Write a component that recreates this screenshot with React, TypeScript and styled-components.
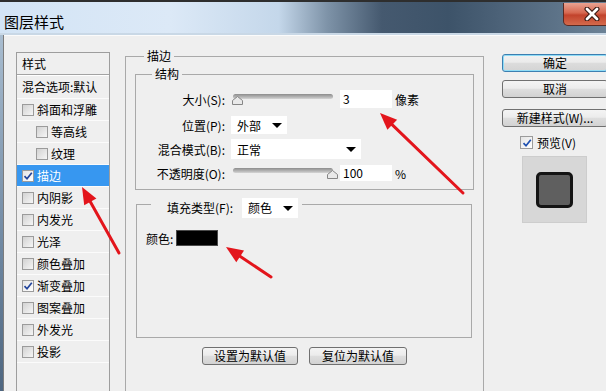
import React from 'react'
import styled, {createGlobalStyle, css} from 'styled-components'

//** data
interface LayerItem {
  name: string
  checked?: boolean
  indent?: boolean
  active?: boolean
}

const layers: LayerItem[] = [
  {name: '斜面和浮雕'},
  {name: '等高线', indent: true},
  {name: '纹理', indent: true},
  {name: '描边', checked: true, active: true},
  {name: '内阴影'},
  {name: '内发光'},
  {name: '光泽'},
  {name: '颜色叠加'},
  {name: '渐变叠加', checked: true},
  {name: '图案叠加'},
  {name: '外发光'},
  {name: '投影'},
]

type Pt = [number, number]

const arrows: {tail: Pt, tip: Pt}[] = [
  {tail: [119, 253], tip: [82, 187]},
  {tail: [463, 193], tip: [380, 113]},
  {tail: [271, 277], tip: [226, 247]},
]

const arrowParts = (tail: Pt, tip: Pt, len = 17, half = 7) => {
  const dx = tip[0] - tail[0]
  const dy = tip[1] - tail[1]
  const d = Math.hypot(dx, dy)
  const ux = dx / d
  const uy = dy / d
  const bx = tip[0] - ux * len
  const by = tip[1] - uy * len
  const head = `${tip[0]},${tip[1]} ${bx - uy * half},${by + ux * half} ${bx + uy * half},${by - ux * half}`
  return {bx: bx + ux * 2, by: by + uy * 2, head}
}

//** small parts
const Check = ({color = '#22449c'}: {color?: string}) => (
  <svg width="10" height="10" viewBox="0 0 10 10">
    <path d="M1.5 5.2 L4 7.8 L8.8 1.8" fill="none" stroke={color} strokeWidth="1.7" />
  </svg>
)

const CheckBox = ({checked, size = 12}: {checked?: boolean, size?: number}) => (
  <Box $size={size} $checked={checked}>
    {checked && <Check />}
  </Box>
)

const Slider = ({value}: {value: number}) => (
  <SliderWrap>
    <Track />
    <Thumb style={{left: -1 + value * 95}} width="11" height="9" viewBox="0 0 11 9">
      <path d="M5.5 0.5 L10.5 4.5 L10.5 8.5 L0.5 8.5 L0.5 4.5 Z" fill="#e9e9e9" stroke="#868686" />
    </Thumb>
  </SliderWrap>
)

const Select = ({text, width, height}: {text: string, width: number, height: number}) => (
  <SelectBox $w={width} $h={height}>
    <span>{text}</span>
    <Caret />
  </SelectBox>
)

export default function App() {
  return (
    <Window>
      <GlobalStyle />
      <TitleBar>
        <Title>图层样式</Title>
        <CloseButton>
          <svg width="16" height="14" viewBox="0 0 16 14">
            <path d="M3 2 L13 12 M13 2 L3 12" stroke="#3a1a14" strokeWidth="5" strokeLinecap="round" />
            <path d="M3 2 L13 12 M13 2 L3 12" stroke="#ffffff" strokeWidth="2.8" strokeLinecap="round" />
          </svg>
        </CloseButton>
      </TitleBar>

      <Frame>
        <FrameEdge />
        <Body>

          {/** style list **/}
          <StyleList>
            <ListHeader>样式</ListHeader>
            <BlendRow>混合选项:默认</BlendRow>
            {layers.map(item => (
              <LayerRow key={item.name} $indent={item.indent} $active={item.active}>
                <CheckBox checked={item.checked} />
                <span>{item.name}</span>
              </LayerRow>
            ))}
          </StyleList>

          {/** stroke settings **/}
          <MainPanel>
            <PanelLegend>描边</PanelLegend>
            <StructureSet>
              <GroupLegend>结构</GroupLegend>
              <FormRow $h={26}>
                <FieldLabel>大小(S):</FieldLabel>
                <Slider value={0} />
                <NumberBox $h={18}>3</NumberBox>
                <Unit>像素</Unit>
              </FormRow>
              <FormRow $h={26}>
                <FieldLabel>位置(P):</FieldLabel>
                <Select text="外部" width={56} height={18} />
              </FormRow>
              <FormRow $h={22}>
                <FieldLabel>混合模式(B):</FieldLabel>
                <Select text="正常" width={130} height={20} />
              </FormRow>
              <FormRow $h={26}>
                <FieldLabel>不透明度(O):</FieldLabel>
                <Slider value={1} />
                <NumberBox $h={16}>100</NumberBox>
                <Unit>%</Unit>
              </FormRow>
            </StructureSet>

            <FillSet>
              <FillLegend>
                <span>填充类型(F):</span>
                <Select text="颜色" width={56} height={20} />
              </FillLegend>
              <FillBody>
                <ColorRow>
                  <span>颜色:</span>
                  <Swatch />
                </ColorRow>
              </FillBody>
            </FillSet>

            <ButtonRow>
              <Button $w={96}>设置为默认值</Button>
              <Button $w={98}>复位为默认值</Button>
            </ButtonRow>
          </MainPanel>

          {/** actions **/}
          <SideColumn>
            <Button $w={106} $primary>确定</Button>
            <Button $w={106} $gap={8}>取消</Button>
            <Button $w={106} $gap={11}>新建样式(W)...</Button>
            <PreviewToggle>
              <Box $size={13} $checked>
                <Check color="#1d4fb0" />
              </Box>
              <span>预览(V)</span>
            </PreviewToggle>
            <PreviewBox>
              <PreviewSwatch />
            </PreviewBox>
          </SideColumn>
        </Body>
      </Frame>

      <Overlay width="606" height="391">
        {arrows.map((a, i) => {
          const p = arrowParts(a.tail, a.tip)
          return (
            <g key={i}>
              <line x1={a.tail[0]} y1={a.tail[1]} x2={p.bx} y2={p.by} stroke="#e3151c" strokeWidth="3" strokeLinecap="round" />
              <polygon points={p.head} fill="#e3151c" />
            </g>
          )
        })}
      </Overlay>
    </Window>
  )
}

const GlobalStyle = createGlobalStyle`
  html, body {
    margin: 0;
    padding: 0;
    background: #efefef;
  }
  body {
    font-family: "Noto Sans CJK SC", "Liberation Sans", sans-serif;
    font-size: 12px;
    color: #000;
  }
`
const Window = styled.div`
  position: relative;
  width: 606px;
  height: 391px;
  overflow: hidden;
  background: #efefef;
`
const TitleBar = styled.div`
  display: flex;
  justify-content: space-between;
  align-items: flex-start;
  height: 35px;
  box-sizing: border-box;
  border-top: 2px solid #2e2e2e;
  background: linear-gradient(90deg, #d3e4f5 0%, #dce9f7 28%, #c4d7ea 46%, #7e93a8 54%, #45596f 63%, #3d5369 74%, #52687e 86%, #6c8296 100%);
  box-shadow: inset 0 -2px 0 #c9d8e6;
`
const Title = styled.div`
  margin-top: 10px;
  padding-left: 4px;
  font-size: 15px;
  line-height: 20px;
  color: #000;
`
const CloseButton = styled.div`
  display: flex;
  align-items: center;
  justify-content: center;
  width: 58px;
  height: 23px;
  margin-top: 1px;
  margin-right: -15px;
  box-sizing: border-box;
  border: 1px solid #5a2a22;
  border-top: none;
  border-radius: 0 0 5px 5px;
  background: linear-gradient(#e9a392 0%, #d6674f 45%, #c2432c 55%, #d46a4c 100%);
`
const Frame = styled.div`
  display: flex;
  height: 356px;
`
const FrameEdge = styled.div`
  width: 3px;
  flex-shrink: 0;
  background: linear-gradient(#a9bdd0, #6f88a2 60%, #4e6680);
  border-right: 1px solid #7c7c7c;
`
const Body = styled.div`
  display: flex;
  flex: 1;
  align-items: flex-start;
  padding: 12px 0 0 12px;
  background: #efefef;
  border-top: 1px solid #fbfbfb;
  overflow: hidden;
`
const StyleList = styled.div`
  flex-shrink: 0;
  width: 94px;
  height: 360px;
  margin-top: 4px;
  box-sizing: border-box;
  border: 1px solid #9d9d9d;
  border-bottom: none;
  line-height: 16px;
`
const ListHeader = styled.div`
  height: 21px;
  padding-left: 5px;
  line-height: 21px;
  border-bottom: 1px solid #a3a3a3;
  box-shadow: 0 1px 0 #fff;
`
const BlendRow = styled.div`
  height: 23px;
  padding-left: 5px;
  line-height: 22px;
  border-bottom: 1px solid #fbfbfb;
  box-sizing: border-box;
  margin-top: 1px;
  white-space: nowrap;
`
const LayerRow = styled.div<{$indent?: boolean, $active?: boolean}>`
  display: flex;
  align-items: center;
  gap: 3px;
  height: 22px;
  box-sizing: border-box;
  padding-left: ${p => p.$indent ? 19 : 5}px;
  border-bottom: 1px solid #fbfbfb;
  background: ${p => p.$active ? '#3797f0' : 'transparent'};
  color: ${p => p.$active ? '#fff' : '#000'};
`
const Box = styled.span<{$size: number, $checked?: boolean}>`
  display: inline-flex;
  align-items: center;
  justify-content: center;
  flex-shrink: 0;
  width: ${p => p.$size}px;
  height: ${p => p.$size}px;
  box-sizing: border-box;
  border: 1px solid #9b9b9b;
  background: ${p => p.$checked ? 'linear-gradient(135deg, #e4e4e4, #ffffff)' : 'linear-gradient(135deg, #d2d2d2, #f6f6f6)'};
`
const MainPanel = styled.fieldset`
  flex-shrink: 0;
  width: 359px;
  height: 360px;
  margin: 0 0 0 15px;
  padding: 0 9px;
  box-sizing: border-box;
  min-width: 0;
  border: 1px solid #a9a9a9;
`
const PanelLegend = styled.legend`
  margin-left: 9px;
  padding: 0 3px;
  line-height: 16px;
`
const StructureSet = styled.fieldset`
  margin: 2px 0 0;
  padding: 4px 0 3px;
  min-width: 0;
  border: 1px solid #a9a9a9;
`
const GroupLegend = styled.legend`
  margin-left: 16px;
  padding: 0 3px;
  line-height: 16px;
`
const FormRow = styled.div<{$h: number}>`
  display: flex;
  align-items: center;
  height: ${p => p.$h}px;
`
const FieldLabel = styled.span`
  flex-shrink: 0;
  width: 89px;
  margin-right: 6px;
  text-align: right;
  white-space: nowrap;
`
const SliderWrap = styled.div`
  position: relative;
  width: 100px;
  height: 12px;
  margin-left: 2px;
`
const Track = styled.div`
  margin-top: 1px;
  height: 5px;
  border-radius: 3px;
  background: linear-gradient(#8c8c8c, #bdbdbd 70%, #d6d6d6);
`
const Thumb = styled.svg`
  position: absolute;
  top: 3px;
`
const NumberBox = styled.div<{$h: number}>`
  width: 52px;
  height: ${p => p.$h}px;
  margin-left: 7px;
  padding-left: 3px;
  box-sizing: border-box;
  background: #fff;
  line-height: ${p => p.$h}px;
`
const Unit = styled.span`
  margin-left: 3px;
`
const SelectBox = styled.div<{$w: number, $h: number}>`
  display: flex;
  align-items: center;
  justify-content: space-between;
  width: ${p => p.$w}px;
  height: ${p => p.$h}px;
  padding: 0 5px 0 6px;
  box-sizing: border-box;
  background: #fff;
`
const Caret = styled.span`
  width: 0;
  height: 0;
  border-left: 5px solid transparent;
  border-right: 5px solid transparent;
  border-top: 5px solid #000;
`
const FillSet = styled.fieldset`
  width: 336px;
  margin: 0 0 0 1px;
  padding: 0 0 0 9px;
  box-sizing: border-box;
  min-width: 0;
  border: 1px solid #a9a9a9;
`
const FillLegend = styled.legend`
  display: flex;
  align-items: center;
  gap: 9px;
  margin-left: 5px;
  padding: 8px 4px 0 16px;
  line-height: 16px;
`
const FillBody = styled.div`
  padding: 12px 0 91px;
`
const ColorRow = styled.div`
  display: flex;
  align-items: center;
  height: 16px;
`
const Swatch = styled.div`
  width: 42px;
  height: 16px;
  margin-left: 3px;
  box-sizing: border-box;
  border: 1px solid #4a4a4a;
  background: #000;
`
const ButtonRow = styled.div`
  display: flex;
  justify-content: center;
  gap: 11px;
  margin-top: 9px;
`
const Button = styled.div<{$w: number, $primary?: boolean, $gap?: number}>`
  flex-shrink: 0;
  width: ${p => p.$w}px;
  height: 18px;
  margin-top: ${p => p.$gap || 0}px;
  box-sizing: border-box;
  border: 1px solid #707070;
  border-radius: 3px;
  background: linear-gradient(#f4f4f4, #ececec 45%, #dedede 52%, #d2d2d2);
  text-align: center;
  line-height: 16px;
  white-space: nowrap;
  ${p => p.$primary && css`
    border-color: #3c7fb1;
    box-shadow: inset 0 0 0 1px #8fdcf6;
    background: linear-gradient(#f2f2f2, #ebebeb 45%, #dcdcdc 52%, #d4d4d4);
  `}
`
const SideColumn = styled.div`
  display: flex;
  flex-direction: column;
  flex-shrink: 0;
  width: 106px;
  margin-left: 18px;
  padding-top: 6px;
`
const PreviewToggle = styled.div`
  display: flex;
  align-items: center;
  gap: 4px;
  height: 13px;
  margin-top: 9px;
  padding-left: 18px;
  line-height: 13px;
`
const PreviewBox = styled.div`
  display: flex;
  align-items: center;
  justify-content: center;
  width: 65px;
  height: 67px;
  margin: 7px 0 0 20px;
  box-sizing: border-box;
  border: 1px solid #cdcdcd;
  background: #d7d7d7;
`
const PreviewSwatch = styled.div`
  width: 37px;
  height: 36px;
  box-sizing: border-box;
  border: 3px solid #141414;
  border-radius: 5px;
  background: #5f5f5f;
`
const Overlay = styled.svg`
  position: absolute;
  top: 0;
  left: 0;
  pointer-events: none;
`
